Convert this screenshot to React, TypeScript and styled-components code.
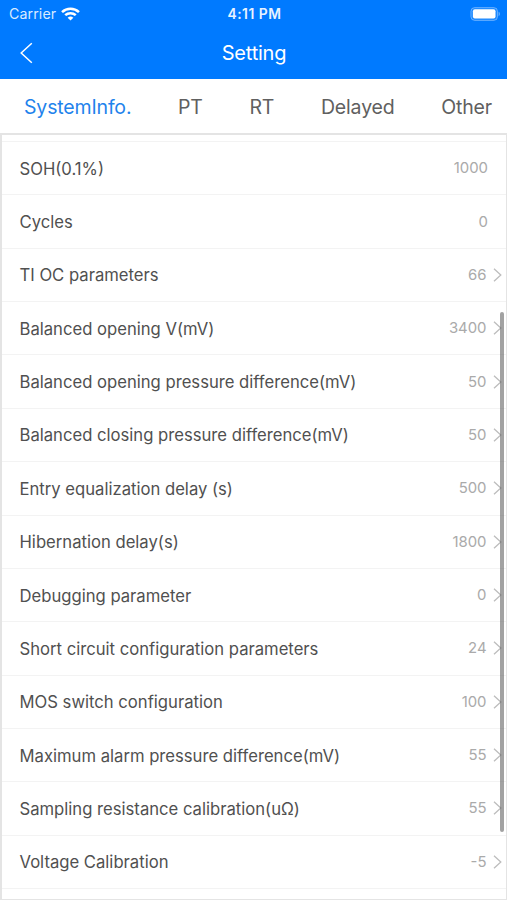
import React from "react";
import styled, { createGlobalStyle } from "styled-components";

const GlobalStyle = createGlobalStyle`
  * { box-sizing: border-box; }
  body { margin: 0; background: #fff; font-family: Inter, "Liberation Sans", sans-serif; }
`;

const Screen = styled.main`
  width: 507px;
  height: 900px;
  overflow: hidden;
  display: flex;
  flex-direction: column;
  background: #fff;
`;

const Header = styled.header`
  height: 79px;
  flex: none;
  background: #007aff;
  color: #fff;
`;

const StatusBar = styled.div`
  height: 27px;
  display: grid;
  grid-template-columns: 1fr auto 1fr;
  align-items: center;
  padding: 0 7px 0 9px;
`;

const Carrier = styled.div`
  display: flex;
  align-items: center;
  gap: 5px;
  font-size: 14.2px;
  color: #d9ebff;
  letter-spacing: 0.1px;
`;

const Clock = styled.div`
  font-size: 13.8px;
  font-weight: 600;
  color: #e8f3ff;
  letter-spacing: 0.55px;
`;

const BatteryIcon = styled.svg`
  justify-self: end;
  display: block;
`;

const NavBar = styled.div`
  height: 52px;
  display: grid;
  grid-template-columns: 60px 1fr 60px;
  align-items: center;
`;

const BackButton = styled.button`
  height: 52px;
  padding: 0 0 0 19px;
  border: 0;
  background: none;
  color: inherit;
  display: flex;
  align-items: center;
`;

const Title = styled.h1`
  margin: 0;
  padding: 0 0 1px 1px;
  text-align: center;
  font-size: 20px;
  font-weight: 400;
  letter-spacing: -0.2px;
`;

const Tabs = styled.nav`
  height: 54px;
  flex: none;
  display: flex;
  align-items: center;
  justify-content: space-between;
  padding: 1px 15px 0 24px;
`;

const Tab = styled.button<{ $active?: boolean }>`
  padding: 0;
  border: 0;
  background: none;
  font: 400 19.5px/24px Inter, sans-serif;
  letter-spacing: -0.16px;
  white-space: nowrap;
  color: ${(p) => (p.$active ? "#1f83ec" : "#606060")};
`;

const Panel = styled.section`
  position: relative;
  height: 767px;
  flex: none;
  border: solid #e4e4e4;
  border-width: 2px 1px 1px 2px;
  padding-top: 6px;
  overflow: hidden;
`;

const List = styled.ul`
  margin: 0;
  padding: 0;
  list-style: none;
  border-top: 1px solid #f3f3f3;
`;

const Row = styled.li<{ $link: boolean }>`
  height: 53.36px;
  display: flex;
  align-items: center;
  justify-content: space-between;
  padding: 1px ${(p) => (p.$link ? 4.5 : 18)}px 0 17.5px;
  border-bottom: 1px solid #f3f3f3;
`;

const Label = styled.span`
  font-size: 16.65px;
  line-height: 22px;
  color: #505050;
  white-space: nowrap;
`;

const Value = styled.span`
  display: flex;
  align-items: center;
  gap: 6px;
  padding-bottom: 1px;
  font-size: 14.9px;
  line-height: 20px;
  color: #aaa;
`;

const Scrollbar = styled.div`
  position: absolute;
  top: 177px;
  right: 2px;
  width: 4px;
  height: 520px;
  border-radius: 2px;
  background: rgba(100, 100, 100, 0.6);
`;

const tabs = ["SystemInfo.", "PT", "RT", "Delayed", "Other"];

const settings: { label: string; value: string; link: boolean }[] = [
  { label: "SOH(0.1%)", value: "1000", link: false },
  { label: "Cycles", value: "0", link: false },
  { label: "TI OC parameters", value: "66", link: true },
  { label: "Balanced opening V(mV)", value: "3400", link: true },
  { label: "Balanced opening pressure difference(mV)", value: "50", link: true },
  { label: "Balanced closing pressure difference(mV)", value: "50", link: true },
  { label: "Entry equalization delay (s)", value: "500", link: true },
  { label: "Hibernation delay(s)", value: "1800", link: true },
  { label: "Debugging parameter", value: "0", link: true },
  { label: "Short circuit configuration parameters", value: "24", link: true },
  { label: "MOS switch configuration", value: "100", link: true },
  { label: "Maximum alarm pressure difference(mV)", value: "55", link: true },
  { label: "Sampling resistance calibration(uΩ)", value: "55", link: true },
  { label: "Voltage Calibration", value: "-5", link: true },
];

const Wifi = () => (
  <svg width="19" height="14" viewBox="0 0 18 14" preserveAspectRatio="none" fill="none" stroke="#fff" strokeWidth="2.4">
    <path d="M1 5.1C5.5.7 12.5.7 17 5.1" />
    <path d="M4 8.2c2.8-2.7 7.2-2.7 10 0" />
    <path d="M9 13.5 6.3 10.8a3.8 3.8 0 0 1 5.4 0Z" fill="#fff" stroke="none" />
  </svg>
);

const Battery = () => (
  <BatteryIcon width="30" height="14" viewBox="0 0 30 14">
    <rect x="0.9" y="0.6" width="26.6" height="12.8" rx="3.8" fill="#fff" fillOpacity="0.12" stroke="#fff" strokeOpacity="0.35" />
    <rect x="2.9" y="2.2" width="22.6" height="9.4" rx="2" fill="#fff" />
    <path d="M28.6 4.8c1.6.6 1.6 3.8 0 4.4Z" fill="#fff" fillOpacity="0.45" />
  </BatteryIcon>
);

const Chevron = () => (
  <svg width="9" height="14" viewBox="0 0 9 14" fill="none" stroke="#bdbdbd" strokeWidth="1.3">
    <path d="m1 .8 6.8 6.2L1 13.2" />
  </svg>
);

export default function App() {
  return (
    <Screen>
      <GlobalStyle />
      <Header>
        <StatusBar>
          <Carrier>
            Carrier
            <Wifi />
          </Carrier>
          <Clock>4:11 PM</Clock>
          <Battery />
        </StatusBar>
        <NavBar>
          <BackButton aria-label="Back">
            <svg width="15" height="22" viewBox="0 0 15 22" fill="none" stroke="#fff" strokeWidth="1.5">
              <path d="M12.8 1.2 2.2 11l10.6 9.8" />
            </svg>
          </BackButton>
          <Title>Setting</Title>
        </NavBar>
      </Header>
      <Tabs>
        {tabs.map((tab, i) => (
          <Tab key={tab} $active={i === 0}>
            {tab}
          </Tab>
        ))}
      </Tabs>
      <Panel>
        <List>
          {settings.map((item) => (
            <Row key={item.label} $link={item.link}>
              <Label>{item.label}</Label>
              <Value>
                {item.value}
                {item.link && <Chevron />}
              </Value>
            </Row>
          ))}
        </List>
        <Scrollbar />
      </Panel>
    </Screen>
  );
}
